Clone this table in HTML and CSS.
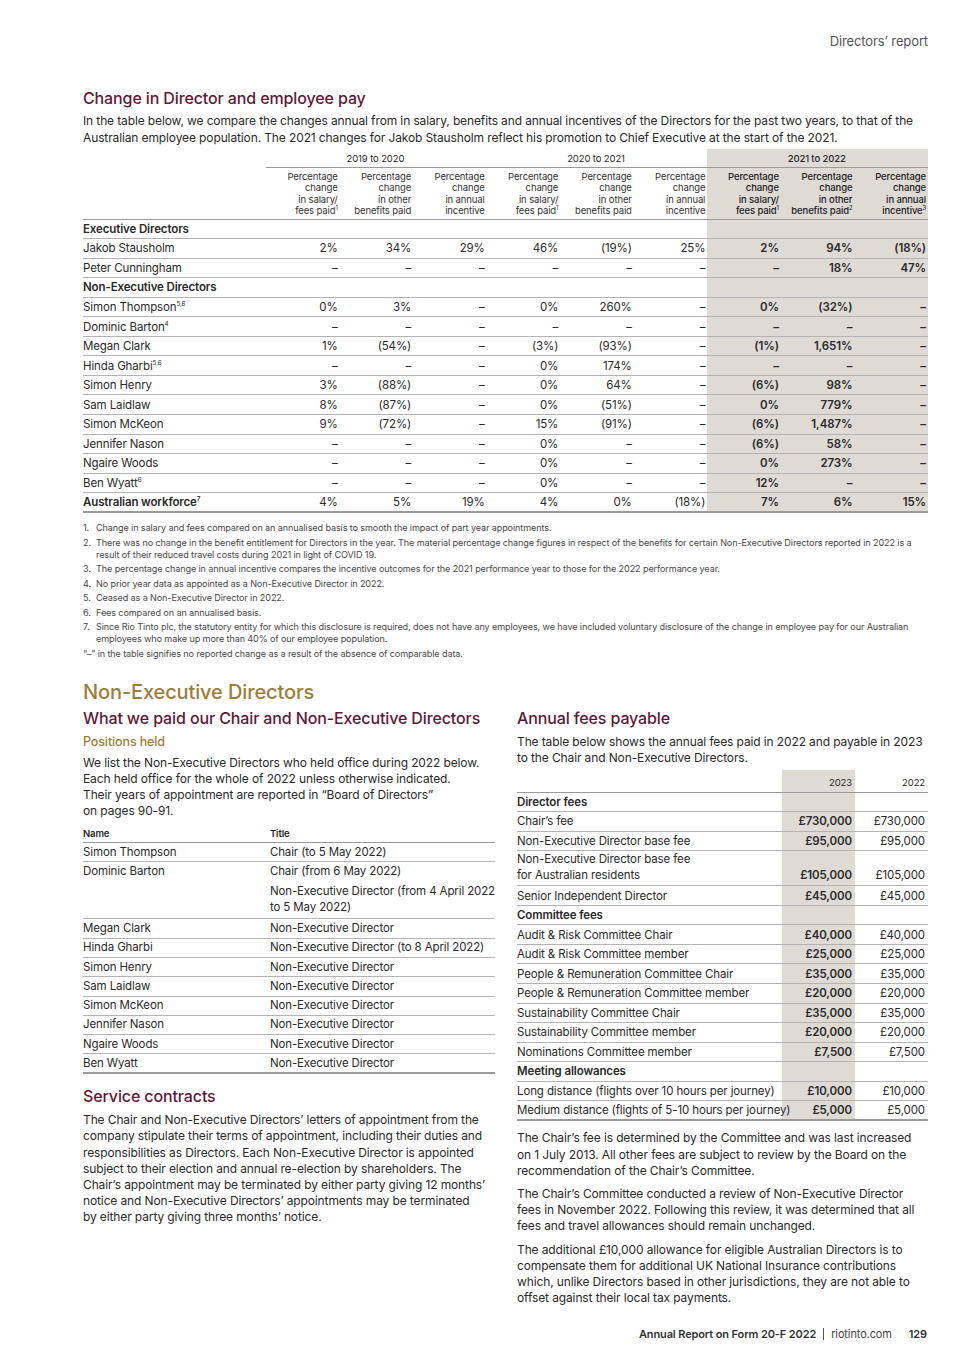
FILE: index.html
```html
<!DOCTYPE html>
<html lang="en">
<head>
<meta charset="utf-8">
<title>Directors’ report – 129</title>
<link rel="stylesheet" href="styles.css">
</head>
<body>
<div class="page">
  <header class="running">Directors’ report</header>

  <section class="change">
    <h2 class="h-maroon">Change in Director and employee pay</h2>
    <p class="intro">In the table below, we compare the changes annual from in salary, benefits and annual incentives of the Directors for the past two years, to that of the<br>Australian employee population. The 2021 changes for Jakob Stausholm reflect his promotion to Chief Executive at the start of the 2021.</p>

    <table class="pay">
      <colgroup>
        <col class="c-name">
        <col class="c-num"><col class="c-num"><col class="c-num">
        <col class="c-num"><col class="c-num"><col class="c-num">
        <col class="c-num"><col class="c-num"><col class="c-num">
      </colgroup>
      <thead>
        <tr class="grp">
          <th></th>
          <th colspan="3" class="g">2019 to 2020</th>
          <th colspan="3" class="g">2020 to 2021</th>
          <th colspan="3" class="g sh">2021 to 2022</th>
        </tr>
        <tr class="sub">
          <th></th>
          <th>Percentage<br>change<br>in salary/<br>fees paid<sup>1</sup></th>
          <th>Percentage<br>change<br>in other<br>benefits paid</th>
          <th>Percentage<br>change<br>in annual<br>incentive</th>
          <th>Percentage<br>change<br>in salary/<br>fees paid<sup>1</sup></th>
          <th>Percentage<br>change<br>in other<br>benefits paid</th>
          <th>Percentage<br>change<br>in annual<br>incentive</th>
          <th class="sh m">Percentage<br>change<br>in salary/<br>fees paid<sup>1</sup></th>
          <th class="sh m">Percentage<br>change<br>in other<br>benefits paid<sup>2</sup></th>
          <th class="sh m">Percentage<br>change<br>in annual<br>incentive<sup>3</sup></th>
        </tr>
      </thead>
      <tbody>
        <tr class="cat"><td>Executive Directors</td><td></td><td></td><td></td><td></td><td></td><td></td><td class="sh"></td><td class="sh"></td><td class="sh"></td></tr>
        <tr><td>Jakob Stausholm</td><td>2%</td><td>34%</td><td>29%</td><td>46%</td><td>(19%)</td><td>25%</td><td class="sh b">2%</td><td class="sh b">94%</td><td class="sh b">(18%)</td></tr>
        <tr><td>Peter Cunningham</td><td>–</td><td>–</td><td>–</td><td>–</td><td>–</td><td>–</td><td class="sh b">–</td><td class="sh b">18%</td><td class="sh b">47%</td></tr>
        <tr class="cat"><td>Non-Executive Directors</td><td></td><td></td><td></td><td></td><td></td><td></td><td class="sh"></td><td class="sh"></td><td class="sh"></td></tr>
        <tr><td>Simon Thompson<sup>5,6</sup></td><td>0%</td><td>3%</td><td>–</td><td>0%</td><td>260%</td><td>–</td><td class="sh b">0%</td><td class="sh b">(32%)</td><td class="sh b">–</td></tr>
        <tr><td>Dominic Barton<sup>4</sup></td><td>–</td><td>–</td><td>–</td><td>–</td><td>–</td><td>–</td><td class="sh b">–</td><td class="sh b">–</td><td class="sh b">–</td></tr>
        <tr><td>Megan Clark</td><td>1%</td><td>(54%)</td><td>–</td><td>(3%)</td><td>(93%)</td><td>–</td><td class="sh b">(1%)</td><td class="sh b">1,651%</td><td class="sh b">–</td></tr>
        <tr><td>Hinda Gharbi<sup>5,6</sup></td><td>–</td><td>–</td><td>–</td><td>0%</td><td>174%</td><td>–</td><td class="sh b">–</td><td class="sh b">–</td><td class="sh b">–</td></tr>
        <tr><td>Simon Henry</td><td>3%</td><td>(88%)</td><td>–</td><td>0%</td><td>64%</td><td>–</td><td class="sh b">(6%)</td><td class="sh b">98%</td><td class="sh b">–</td></tr>
        <tr><td>Sam Laidlaw</td><td>8%</td><td>(87%)</td><td>–</td><td>0%</td><td>(51%)</td><td>–</td><td class="sh b">0%</td><td class="sh b">779%</td><td class="sh b">–</td></tr>
        <tr><td>Simon McKeon</td><td>9%</td><td>(72%)</td><td>–</td><td>15%</td><td>(91%)</td><td>–</td><td class="sh b">(6%)</td><td class="sh b">1,487%</td><td class="sh b">–</td></tr>
        <tr><td>Jennifer Nason</td><td>–</td><td>–</td><td>–</td><td>0%</td><td>–</td><td>–</td><td class="sh b">(6%)</td><td class="sh b">58%</td><td class="sh b">–</td></tr>
        <tr><td>Ngaire Woods</td><td>–</td><td>–</td><td>–</td><td>0%</td><td>–</td><td>–</td><td class="sh b">0%</td><td class="sh b">273%</td><td class="sh b">–</td></tr>
        <tr><td>Ben Wyatt<sup>6</sup></td><td>–</td><td>–</td><td>–</td><td>0%</td><td>–</td><td>–</td><td class="sh b">12%</td><td class="sh b">–</td><td class="sh b">–</td></tr>
        <tr class="total"><td>Australian workforce<sup>7</sup></td><td>4%</td><td>5%</td><td>19%</td><td>4%</td><td>0%</td><td>(18%)</td><td class="sh b">7%</td><td class="sh b">6%</td><td class="sh b">15%</td></tr>
      </tbody>
    </table>

    <ol class="notes">
      <li><span class="n">1.</span><span>Change in salary and fees compared on an annualised basis to smooth the impact of part year appointments.</span></li>
      <li><span class="n">2.</span><span>There was no change in the benefit entitlement for Directors in the year. The material percentage change figures in respect of the benefits for certain Non-Executive Directors reported in 2022 is a<br>result of their reduced travel costs during 2021 in light of COVID 19.</span></li>
      <li><span class="n">3.</span><span>The percentage change in annual incentive compares the incentive outcomes for the 2021 performance year to those for the 2022 performance year.</span></li>
      <li><span class="n">4.</span><span>No prior year data as appointed as a Non-Executive Director in 2022.</span></li>
      <li><span class="n">5.</span><span>Ceased as a Non-Executive Director in 2022.</span></li>
      <li><span class="n">6.</span><span>Fees compared on an annualised basis.</span></li>
      <li><span class="n">7.</span><span>Since Rio Tinto plc, the statutory entity for which this disclosure is required, does not have any employees, we have included voluntary disclosure of the change in employee pay for our Australian<br>employees who make up more than 40% of our employee population.</span></li>
    </ol>
    <p class="dash-note">“–” in the table signifies no reported change as a result of the absence of comparable data.</p>
  </section>

  <h1 class="h-gold">Non-Executive Directors</h1>

  <div class="cols">
    <div class="col">
      <h3 class="h-maroon">What we paid our Chair and Non-Executive Directors</h3>
      <h4 class="h-sub">Positions held</h4>
      <p class="body">We list the Non-Executive Directors who held office during 2022 below.<br>Each held office for the whole of 2022 unless otherwise indicated.<br>Their years of appointment are reported in “Board of Directors”<br>on pages 90-91.</p>

      <table class="pos">
        <thead>
          <tr><th>Name</th><th>Title</th></tr>
        </thead>
        <tbody>
          <tr><td>Simon Thompson</td><td>Chair (to 5 May 2022)</td></tr>
          <tr class="multi"><td>Dominic Barton</td><td><span class="l1">Chair (from 6 May 2022)</span><span class="l2">Non-Executive Director (from 4 April 2022<br>to 5 May 2022)</span></td></tr>
          <tr><td>Megan Clark</td><td>Non-Executive Director</td></tr>
          <tr><td>Hinda Gharbi</td><td>Non-Executive Director (to 8 April 2022)</td></tr>
          <tr><td>Simon Henry</td><td>Non-Executive Director</td></tr>
          <tr><td>Sam Laidlaw</td><td>Non-Executive Director</td></tr>
          <tr><td>Simon McKeon</td><td>Non-Executive Director</td></tr>
          <tr><td>Jennifer Nason</td><td>Non-Executive Director</td></tr>
          <tr><td>Ngaire Woods</td><td>Non-Executive Director</td></tr>
          <tr><td>Ben Wyatt</td><td>Non-Executive Director</td></tr>
        </tbody>
      </table>

      <h3 class="h-maroon svc">Service contracts</h3>
      <p class="body">The Chair and Non-Executive Directors’ letters of appointment from the<br>company stipulate their terms of appointment, including their duties and<br>responsibilities as Directors. Each Non-Executive Director is appointed<br>subject to their election and annual re-election by shareholders. The<br>Chair’s appointment may be terminated by either party giving 12 months’<br>notice and Non-Executive Directors’ appointments may be terminated<br>by either party giving three months’ notice.</p>
    </div>

    <div class="col">
      <h3 class="h-maroon">Annual fees payable</h3>
      <p class="body fees-intro">The table below shows the annual fees paid in 2022 and payable in 2023<br>to the Chair and Non-Executive Directors.</p>

      <table class="fees">
        <colgroup><col class="f-label"><col class="f-num"><col class="f-num"></colgroup>
        <thead>
          <tr><th></th><th class="sh">2023</th><th>2022</th></tr>
        </thead>
        <tbody>
          <tr class="cat"><td>Director fees</td><td class="sh"></td><td></td></tr>
          <tr><td>Chair’s fee</td><td class="sh b">£730,000</td><td>£730,000</td></tr>
          <tr><td>Non-Executive Director base fee</td><td class="sh b">£95,000</td><td>£95,000</td></tr>
          <tr class="two"><td>Non-Executive Director base fee<br>for Australian residents</td><td class="sh b">£105,000</td><td>£105,000</td></tr>
          <tr><td>Senior Independent Director</td><td class="sh b">£45,000</td><td>£45,000</td></tr>
          <tr class="cat"><td>Committee fees</td><td class="sh"></td><td></td></tr>
          <tr><td>Audit &amp; Risk Committee Chair</td><td class="sh b">£40,000</td><td>£40,000</td></tr>
          <tr><td>Audit &amp; Risk Committee member</td><td class="sh b">£25,000</td><td>£25,000</td></tr>
          <tr><td>People &amp; Remuneration Committee Chair</td><td class="sh b">£35,000</td><td>£35,000</td></tr>
          <tr><td>People &amp; Remuneration Committee member</td><td class="sh b">£20,000</td><td>£20,000</td></tr>
          <tr><td>Sustainability Committee Chair</td><td class="sh b">£35,000</td><td>£35,000</td></tr>
          <tr><td>Sustainability Committee member</td><td class="sh b">£20,000</td><td>£20,000</td></tr>
          <tr><td>Nominations Committee member</td><td class="sh b">£7,500</td><td>£7,500</td></tr>
          <tr class="cat"><td>Meeting allowances</td><td class="sh"></td><td></td></tr>
          <tr><td>Long distance (flights over 10 hours per journey)</td><td class="sh b">£10,000</td><td>£10,000</td></tr>
          <tr><td>Medium distance (flights of 5-10 hours per journey)</td><td class="sh b">£5,000</td><td>£5,000</td></tr>
        </tbody>
      </table>

      <p class="body after">The Chair’s fee is determined by the Committee and was last increased<br>on 1 July 2013. All other fees are subject to review by the Board on the<br>recommendation of the Chair’s Committee.</p>
      <p class="body after2">The Chair’s Committee conducted a review of Non-Executive Director<br>fees in November 2022. Following this review, it was determined that all<br>fees and travel allowances should remain unchanged.</p>
      <p class="body after2">The additional £10,000 allowance for eligible Australian Directors is to<br>compensate them for additional UK National Insurance contributions<br>which, unlike Directors based in other jurisdictions, they are not able to<br>offset against their local tax payments.</p>
    </div>
  </div>

  <footer class="foot">
    <span class="pub">Annual Report on Form 20-F 2022</span>
    <span class="sep"></span>
    <span class="site">riotinto.com</span>
    <span class="pg">129</span>
  </footer>
</div>
</body>
</html>
```

FILE: styles.css
```css
* { box-sizing: border-box; }
html, body { margin: 0; padding: 0; background: #fff; }
body {
  font-family: Inter, "Liberation Sans", Arial, sans-serif;
  color: #2a2a2a;
  font-size: 12px;
  letter-spacing: -0.12px;
}
.page {
  width: 965px;
  height: 1365px;
  padding: 33px 37px 0 83px;
  display: flex;
  flex-direction: column;
}
.running {
  text-align: right;
  font-size: 13px;
  line-height: 16px;
  color: #555;
}
h1, h2, h3, h4, p, ol { margin: 0; padding: 0; }
.h-maroon {
  color: #5e1838;
  font-weight: 500;
  font-size: 16px;
  line-height: 20px;
}
.change h2 { margin-top: 39px; }
.intro {
  margin-top: 4px;
  font-size: 12px;
  line-height: 17px;
}

/* pay table */
table { border-collapse: collapse; }
.pay {
  margin-top: 3px;
  width: 845px;
  table-layout: fixed;
  font-size: 11.5px;
}
.pay col.c-name { width: 183px; }
.pay col.c-num { width: 73.5px; }
.pay th, .pay td {
  padding: 0 2px 0 0;
  text-align: right;
  font-weight: 400;
  white-space: nowrap;
}
.pay td:first-child, .pay th:first-child { text-align: left; padding: 0; }
.pay .grp th {
  height: 18px;
  font-size: 9.5px;
  text-align: center;
  vertical-align: middle;
  padding-top: 1px;
}
.pay .grp th.g { border-bottom: 1px solid #9a9a9a; }
.pay .grp th.sh { font-weight: 500; }
.pay .sub th {
  font-size: 9.5px;
  line-height: 11.5px;
  padding-top: 3px;
  padding-bottom: 2px;
  vertical-align: top;
  border-bottom: 1px solid #9a9a9a;
  color: #333;
}
.pay .sub th.m { font-weight: 500; color: #222; }
.pay tbody td {
  height: 19.55px;
  border-bottom: 1px solid #b3b3b3;
  vertical-align: middle;
  line-height: 14px;
}
.pay tbody tr.total td { border-bottom: 2px solid #9a9a9a; }
.pay .cat td:first-child, .pay .total td:first-child { font-weight: 600; }
.sh { background: #dedbd5; }
.b { font-weight: 600 !important; }
sup { font-size: 0.55em; line-height: 0; vertical-align: 0.75em; }
.pay .sub th sup { font-size: 0.6em; }

/* notes */
.notes {
  list-style: none;
  margin-top: 9px;
  font-size: 9.1px;
  line-height: 12px;
  color: #4a4a4a;
}
.notes li { display: flex; margin-bottom: 2.5px; }
.notes .n { width: 13px; flex: none; }
.dash-note { font-size: 9.1px; line-height: 12px; color: #4a4a4a; }

.h-gold {
  margin-top: 20px;
  color: #9b7e3c;
  font-size: 20px;
  line-height: 24px;
  font-weight: 500;
}

.cols {
  display: grid;
  grid-template-columns: 412px 411px;
  column-gap: 22px;
  margin-top: 4px;
}
.h-sub {
  margin-top: 6px;
  color: #9b7e3c;
  font-size: 12.5px;
  line-height: 16px;
  font-weight: 500;
}
.body {
  font-size: 12px;
  line-height: 16.2px;
}
.h-sub + .body { margin-top: 5px; }

/* positions */
.pos {
  width: 412px;
  margin-top: 5px;
  font-size: 11.5px;
}
.pos th {
  text-align: left;
  font-size: 9.5px;
  font-weight: 600;
  height: 18px;
  vertical-align: middle;
  border-bottom: 1px solid #9a9a9a;
  padding: 0;
}
.pos th:first-child { width: 188px; }
.pos th:last-child { padding-left: 1px; }
.pos td {
  padding: 0;
  height: 19.3px;
  line-height: 15px;
  vertical-align: middle;
  border-bottom: 1px solid #b3b3b3;
}
.pos td + td { padding-left: 1px; }
.pos tr.multi td { vertical-align: top; padding-top: 1px; padding-bottom: 3px; line-height: 16px; }
.pos .l1, .pos .l2 { display: block; white-space: nowrap; }
.pos .l2 { margin-top: 4px; }
.pos tbody tr:last-child td { border-bottom: 2px solid #9a9a9a; }

.svc { margin-top: 12px; }
.svc + .body { margin-top: 6px; }

/* fees */
.fees-intro { margin-top: 6px; }
.fees {
  width: 411px;
  margin-top: 4px;
  table-layout: fixed;
  font-size: 11.5px;
}
.fees col.f-label { width: 265px; }
.fees col.f-num { width: 73px; }
.fees th {
  height: 22px;
  font-size: 9.5px;
  font-weight: 400;
  text-align: right;
  vertical-align: bottom;
  padding: 0 3px 4px 0;
  border-bottom: 1px solid #9a9a9a;
}
.fees td {
  height: 19.55px;
  padding: 0 3px 0 0;
  text-align: right;
  vertical-align: middle;
  line-height: 14px;
  border-bottom: 1px solid #b3b3b3;
  white-space: nowrap;
}
.fees td:first-child { text-align: left; padding: 0; }
.fees tr.two td { height: 35px; line-height: 15.5px; vertical-align: bottom; padding-bottom: 2px; }
.fees .cat td:first-child { font-weight: 600; }
.fees tbody tr:last-child td { border-bottom: 2px solid #9a9a9a; }
.after { margin-top: 9px; }
.after2 { margin-top: 7px; }

/* footer */
.foot {
  margin-top: auto;
  height: 38px;
  display: flex;
  justify-content: flex-end;
  align-items: flex-start;
  font-size: 11px;
  line-height: 14px;
  color: #333;
  padding-right: 1px;
}
.foot .pub { font-weight: 600; }
.foot .sep { width: 1px; height: 12px; background: #555; margin: 1px 7px 0; }
.foot .site { color: #444; }
.foot .pg { font-weight: 600; margin-left: 17px; }
```
